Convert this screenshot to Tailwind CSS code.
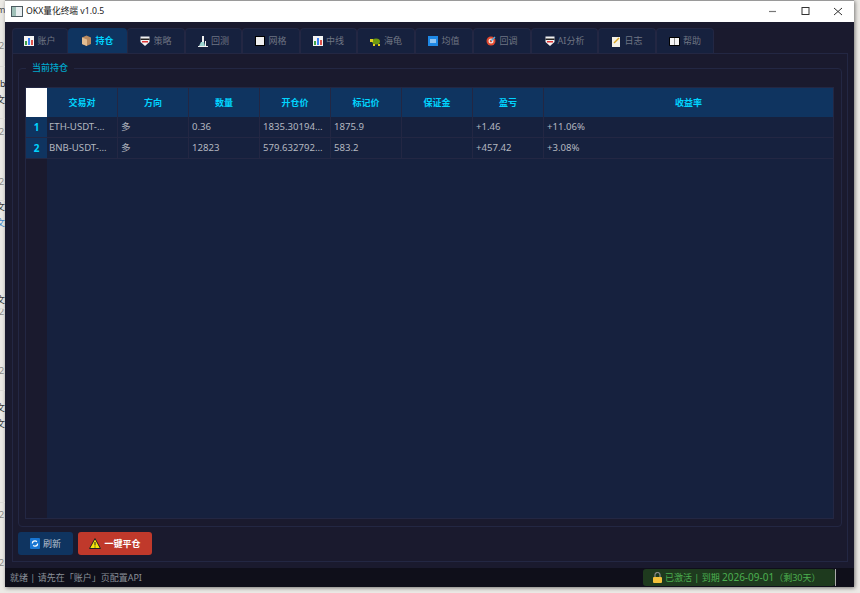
<!DOCTYPE html>
<html lang="zh">
<head>
  <meta charset="UTF-8" />
  <title>OKX量化终端</title>
  <script src="https://cdn.jsdelivr.net/npm/@tailwindcss/browser@4"></script>
</head>
<body class="w-[860px] h-[593px] overflow-hidden bg-[#eceae6] font-['Noto_Sans','Noto_Sans_CJK_SC',sans-serif] text-[9px] flex items-start">
  <!-- 左侧露出的背景文档 -->
  <div class="relative w-[5px] h-[593px] shrink-0 overflow-hidden text-[#8a8a86] text-[9px] leading-none">
    <span class="absolute top-[5px] -left-[3px] text-[#444]">m</span>
    <span class="absolute top-[41px] -left-[1px]">2</span>
    <span class="absolute top-[79px] left-0 text-[#333]">b</span>
    <span class="absolute top-[95px] -left-[4px] text-[#333]">文</span>
    <span class="absolute top-[127px] -left-[1px]">2</span>
    <span class="absolute top-[177px] -left-[1px]">2</span>
    <span class="absolute top-[202px] -left-[4px] text-[#333]">文</span>
    <span class="absolute top-[218px] -left-[4px] text-[#3b82c4]">文</span>
    <span class="absolute top-[295px] -left-[4px] text-[#333]">文</span>
    <span class="absolute top-[307px] -left-[1px]">2</span>
    <span class="absolute top-[366px] -left-[1px]">2</span>
    <span class="absolute top-[403px] -left-[4px] text-[#333]">文</span>
    <span class="absolute top-[419px] -left-[4px] text-[#333]">文</span>
    <span class="absolute top-[510px] -left-[1px]">2</span>
    <span class="absolute top-[558px] -left-[1px]">2</span>
    <div class="absolute top-[66px] inset-x-0 h-px bg-[#dcdad6]"></div>
    <div class="absolute top-[118px] inset-x-0 h-px bg-[#dcdad6]"></div>
    <div class="absolute top-[200px] inset-x-0 h-px bg-[#dcdad6]"></div>
    <div class="absolute top-[308px] inset-x-0 h-px bg-[#dcdad6]"></div>
    <div class="absolute top-[390px] inset-x-0 h-px bg-[#dcdad6]"></div>
    <div class="absolute top-[502px] inset-x-0 h-px bg-[#dcdad6]"></div>
  </div>

  <!-- 窗口 -->
  <div class="w-[849px] h-[587px] shrink-0 flex flex-col border-t border-[#9a9a9a] shadow-[1px_1px_4px_rgba(0,0,0,0.5)]">
    <!-- 标题栏 -->
    <div class="h-[21px] shrink-0 bg-white flex items-center pl-[6px] text-[#222]">
      <svg class="w-[12px] h-[11px]" viewBox="0 0 12 11"><rect width="12" height="11" fill="#4c5a60"/><rect x="1" y="1" width="10" height="9" fill="#e8eef0"/><rect x="1" y="1" width="4" height="9" fill="#9fc0b8"/></svg>
      <span class="ml-[3px] text-[8.7px]">OKX量化终端 v1.0.5</span>
      <div class="ml-auto flex items-center">
        <svg class="w-[32px] h-[21px]" viewBox="0 0 32 21"><path d="M11 10.5h7" stroke="#777" stroke-width="1.2"/></svg>
        <svg class="w-[32px] h-[21px]" viewBox="0 0 32 21"><rect x="12" y="6.5" width="7" height="7" fill="none" stroke="#333" stroke-width="1"/></svg>
        <svg class="w-[32px] h-[21px]" viewBox="0 0 32 21"><path d="M12 7l8 7M20 7l-8 7" stroke="#333" stroke-width="1"/></svg>
      </div>
    </div>

    <div class="flex-1 min-h-0 bg-[#1a1a2e] flex flex-col pt-[6px]">
      <!-- 标签页 -->
      <div class="flex h-[25px] shrink-0 ml-[7px] text-[#6f7583]">
        <div class="w-[56px] flex items-center justify-center gap-[3px] bg-[#16213e] rounded-t-[4px] border border-b-0 border-[#232743]"><svg class="w-[10px] h-[10px]" viewBox="0 0 10 10"><rect width="10" height="10" fill="#f4f4f4"/><rect x="1" y="5" width="2" height="4" fill="#3fa34d"/><rect x="4" y="2" width="2" height="7" fill="#3b82f6"/><rect x="7" y="4" width="2" height="5" fill="#e0524a"/></svg>账户</div>
        <div class="w-[59px] flex items-center justify-center gap-[3px] bg-[#0f3460] rounded-t-[4px] text-[#00d4ff] font-bold"><svg class="w-[11px] h-[11px]" viewBox="0 0 11 11"><path d="M1 2.5L5.5 .5l4.500 2V9l-4.500 2L1 9z" fill="#b98a60"/><path d="M1 2.500L6 4.500V11L1 9z" fill="#e3bd92"/></svg>持仓</div>
        <div class="w-[58px] flex items-center justify-center gap-[3px] bg-[#16213e] rounded-t-[4px] border border-b-0 border-[#232743]"><svg class="w-[10px] h-[10px]" viewBox="0 0 10 10"><path d="M.5.5h9v5.500l-4.500 4-4.500-4z" fill="#f2f2f2"/><rect x=".5" y="2.500" width="9" height="1.500" fill="#222"/><rect x="2" y="5" width="6" height="1.500" fill="#d33"/></svg>策略</div>
        <div class="w-[57px] flex items-center justify-center gap-[3px] bg-[#16213e] rounded-t-[4px] border border-b-0 border-[#232743]"><svg class="w-[10px] h-[11px]" viewBox="0 0 10 11"><rect x="4" y="0" width="2" height="6" fill="#f0f0f0"/><rect x="0" y="10" width="10" height="1" fill="#f0f0f0"/><path d="M3 6h3l1 4H1z" fill="#9cd4d0"/><rect x="7" y="5" width="1" height="5" fill="#f0f0f0"/></svg>回测</div>
        <div class="w-[58px] flex items-center justify-center gap-[3px] bg-[#16213e] rounded-t-[4px] border border-b-0 border-[#232743]"><span class="w-[10px] h-[10px] bg-[#eee] border border-black"></span>网格</div>
        <div class="w-[57px] flex items-center justify-center gap-[3px] bg-[#16213e] rounded-t-[4px] border border-b-0 border-[#232743]"><svg class="w-[10px] h-[10px]" viewBox="0 0 10 10"><rect width="10" height="10" fill="#f4f4f4"/><rect x="1" y="5" width="2" height="4" fill="#3fa34d"/><rect x="4" y="2" width="2" height="7" fill="#3b82f6"/><rect x="7" y="4" width="2" height="5" fill="#e0524a"/></svg>中线</div>
        <div class="w-[58px] flex items-center justify-center gap-[3px] bg-[#16213e] rounded-t-[4px] border border-b-0 border-[#232743]"><svg class="w-[11px] h-[8px] mt-[2px]" viewBox="0 0 11 8"><ellipse cx="6" cy="3.500" rx="4" ry="3" fill="#6f9a10"/><rect x="0" y="1" width="3" height="3" fill="#e3d020"/><rect x="3" y="6" width="2" height="2" fill="#e3d020"/><rect x="8" y="6" width="2" height="2" fill="#e3d020"/></svg>海龟</div>
        <div class="w-[58px] flex items-center justify-center gap-[3px] bg-[#16213e] rounded-t-[4px] border border-b-0 border-[#232743]"><svg class="w-[10px] h-[10px]" viewBox="0 0 10 10"><rect width="10" height="10" fill="#1e88e5"/><path d="M2 4h6M8 6H2" stroke="#fff" stroke-width="1.200"/></svg>均值</div>
        <div class="w-[58px] flex items-center justify-center gap-[3px] bg-[#16213e] rounded-t-[4px] border border-b-0 border-[#232743]"><svg class="w-[10px] h-[10px]" viewBox="0 0 10 10"><circle cx="5" cy="5" r="4.500" fill="#e2492f"/><circle cx="5" cy="5" r="2.500" fill="#f7e6dc"/><circle cx="5" cy="5" r="1.200" fill="#e2492f"/><path d="M5 5l4-4" stroke="#4ab0e8" stroke-width="1.200"/></svg>回调</div>
        <div class="w-[67px] flex items-center justify-center gap-[3px] bg-[#16213e] rounded-t-[4px] border border-b-0 border-[#232743]"><svg class="w-[10px] h-[10px]" viewBox="0 0 10 10"><path d="M.5.5h9v5.500l-4.500 4-4.500-4z" fill="#f2f2f2"/><rect x=".5" y="2.500" width="9" height="1.500" fill="#222"/><rect x="2" y="5" width="6" height="1.500" fill="#d33"/></svg>AI分析</div>
        <div class="w-[58px] flex items-center justify-center gap-[3px] bg-[#16213e] rounded-t-[4px] border border-b-0 border-[#232743]"><svg class="w-[10px] h-[11px]" viewBox="0 0 10 11"><rect x="1" y="1" width="8" height="10" fill="#f3f0e6"/><path d="M3 7l5-5" stroke="#d9a520" stroke-width="1.400"/></svg>日志</div>
        <div class="w-[58px] flex items-center justify-center gap-[3px] bg-[#16213e] rounded-t-[4px] border border-b-0 border-[#232743]"><svg class="w-[11px] h-[9px]" viewBox="0 0 11 9"><rect width="11" height="9" rx="1" fill="#000"/><path d="M1 1h4.300v7H1zM5.700 1H10v7H5.700z" fill="#f4f4f4"/></svg>帮助</div>
      </div>

      <!-- 面板 -->
      <div class="ml-[7px] w-[836px] h-[509px] shrink-0 border border-[#232743] flex flex-col px-[5px] pb-[6px]">
        <!-- 分组框 -->
        <div class="relative mt-[14px] flex-1 min-h-0 border border-[#232743] rounded-[4px] pl-[6px] pr-[7px] pt-[18px] pb-[7px] flex">
          <span class="absolute -top-[8px] left-[7px] px-[6px] bg-[#1a1a2e] text-[#00a8cc] leading-[14px] font-medium">当前持仓</span>
          <!-- 表格 -->
          <div class="flex-1 min-w-0 bg-[#16213e] border border-[#232743] flex">
            <!-- 行号列 -->
            <div class="w-[21px] shrink-0 flex flex-col bg-[#1a1a2e] text-[10px]">
              <div class="h-[29px] bg-white"></div>
              <div class="h-[21px] bg-[#0f3460] border-b border-[#232743] flex items-center justify-center text-[#00d4ff] font-bold">1</div>
              <div class="h-[21px] bg-[#0f3460] border-b border-[#232743] flex items-center justify-center text-[#00d4ff] font-bold">2</div>
            </div>
            <div class="flex-1 min-w-0 flex flex-col">
              <div class="h-[29px] bg-[#0f3460] grid grid-cols-[71px_71px_71px_71px_71px_71px_71px_1fr] text-[#00d4ff] font-bold">
                <div class="flex items-center justify-center border-r border-[#232743]">交易对</div>
                <div class="flex items-center justify-center border-r border-[#232743]">方向</div>
                <div class="flex items-center justify-center border-r border-[#232743]">数量</div>
                <div class="flex items-center justify-center border-r border-[#232743]">开仓价</div>
                <div class="flex items-center justify-center border-r border-[#232743]">标记价</div>
                <div class="flex items-center justify-center border-r border-[#232743]">保证金</div>
                <div class="flex items-center justify-center border-r border-[#232743]">盈亏</div>
                <div class="flex items-center justify-center">收益率</div>
              </div>
              <div class="h-[21px] grid grid-cols-[71px_71px_71px_71px_71px_71px_71px_1fr] text-[#b4b8c0] text-[9.6px] border-b border-[#232743]">
                <div class="flex items-center pl-[2px] border-r border-[#232743]">ETH-USDT-...</div>
                <div class="flex items-center pl-[3px] border-r border-[#232743]">多</div>
                <div class="flex items-center pl-[3px] border-r border-[#232743]">0.36</div>
                <div class="flex items-center pl-[3px] border-r border-[#232743]">1835.30194...</div>
                <div class="flex items-center pl-[3px] border-r border-[#232743]">1875.9</div>
                <div class="border-r border-[#232743]"></div>
                <div class="flex items-center pl-[3px] border-r border-[#232743]">+1.46</div>
                <div class="flex items-center pl-[3px]">+11.06%</div>
              </div>
              <div class="h-[21px] grid grid-cols-[71px_71px_71px_71px_71px_71px_71px_1fr] text-[#b4b8c0] text-[9.6px] border-b border-[#232743]">
                <div class="flex items-center pl-[2px] border-r border-[#232743]">BNB-USDT-...</div>
                <div class="flex items-center pl-[3px] border-r border-[#232743]">多</div>
                <div class="flex items-center pl-[3px] border-r border-[#232743]">12823</div>
                <div class="flex items-center pl-[3px] border-r border-[#232743]">579.632792...</div>
                <div class="flex items-center pl-[3px] border-r border-[#232743]">583.2</div>
                <div class="border-r border-[#232743]"></div>
                <div class="flex items-center pl-[3px] border-r border-[#232743]">+457.42</div>
                <div class="flex items-center pl-[3px]">+3.08%</div>
              </div>
            </div>
          </div>
        </div>
        <!-- 按钮 -->
        <div class="flex gap-[5px] mt-[5px] h-[23px] shrink-0">
          <button class="w-[55px] bg-[#0f3460] rounded-[3px] text-[#b9c3d2] flex items-center justify-center gap-[3px]"><svg class="w-[10px] h-[11px]" viewBox="0 0 10 11"><rect width="10" height="11" rx="1" fill="#1976d2"/><circle cx="5" cy="5.500" r="2.600" fill="none" stroke="#fff" stroke-width="1.200" stroke-dasharray="6 2"/></svg>刷新</button>
          <button class="w-[74px] bg-[#c0392b] rounded-[3px] text-white font-bold flex items-center justify-center gap-[3px]"><svg class="w-[12px] h-[11px]" viewBox="0 0 12 11"><path d="M6 .5L11.500 10.500H.5z" fill="#f5e50a" stroke="#222"/><path d="M6 4v3.500M6 8.500v1" stroke="#222"/></svg>一键平仓</button>
        </div>
      </div>

      <div class="flex-1"></div>
      <!-- 状态栏 -->
      <div class="h-[19px] shrink-0 bg-[#0f0f1a] flex items-center pl-[5px] pr-[18px] text-[#8a8f98]">
        <span>就绪 | 请先在「账户」页配置API</span>
        <div class="ml-auto flex items-center h-full">
          <div class="w-[192px] h-[17px] bg-[#1e3a1e] rounded-[3px] flex items-center pl-[10px] gap-[3px] text-[#4caf50]"><svg class="w-[9px] h-[11px]" viewBox="0 0 9 11"><path d="M2 5V3a2.500 2.500 0 015 0v2" fill="none" stroke="#888" stroke-width="1.200"/><rect y="5" width="9" height="6" rx="1" fill="#f3c13a"/></svg><span>已激活 | 到期 <span class="text-[10px]">2026-09-01</span>（剩30天）</span></div>
          <span class="w-px h-[17px] bg-[#aaa]"></span>
        </div>
      </div>
    </div>
  </div>
</body>
</html>
